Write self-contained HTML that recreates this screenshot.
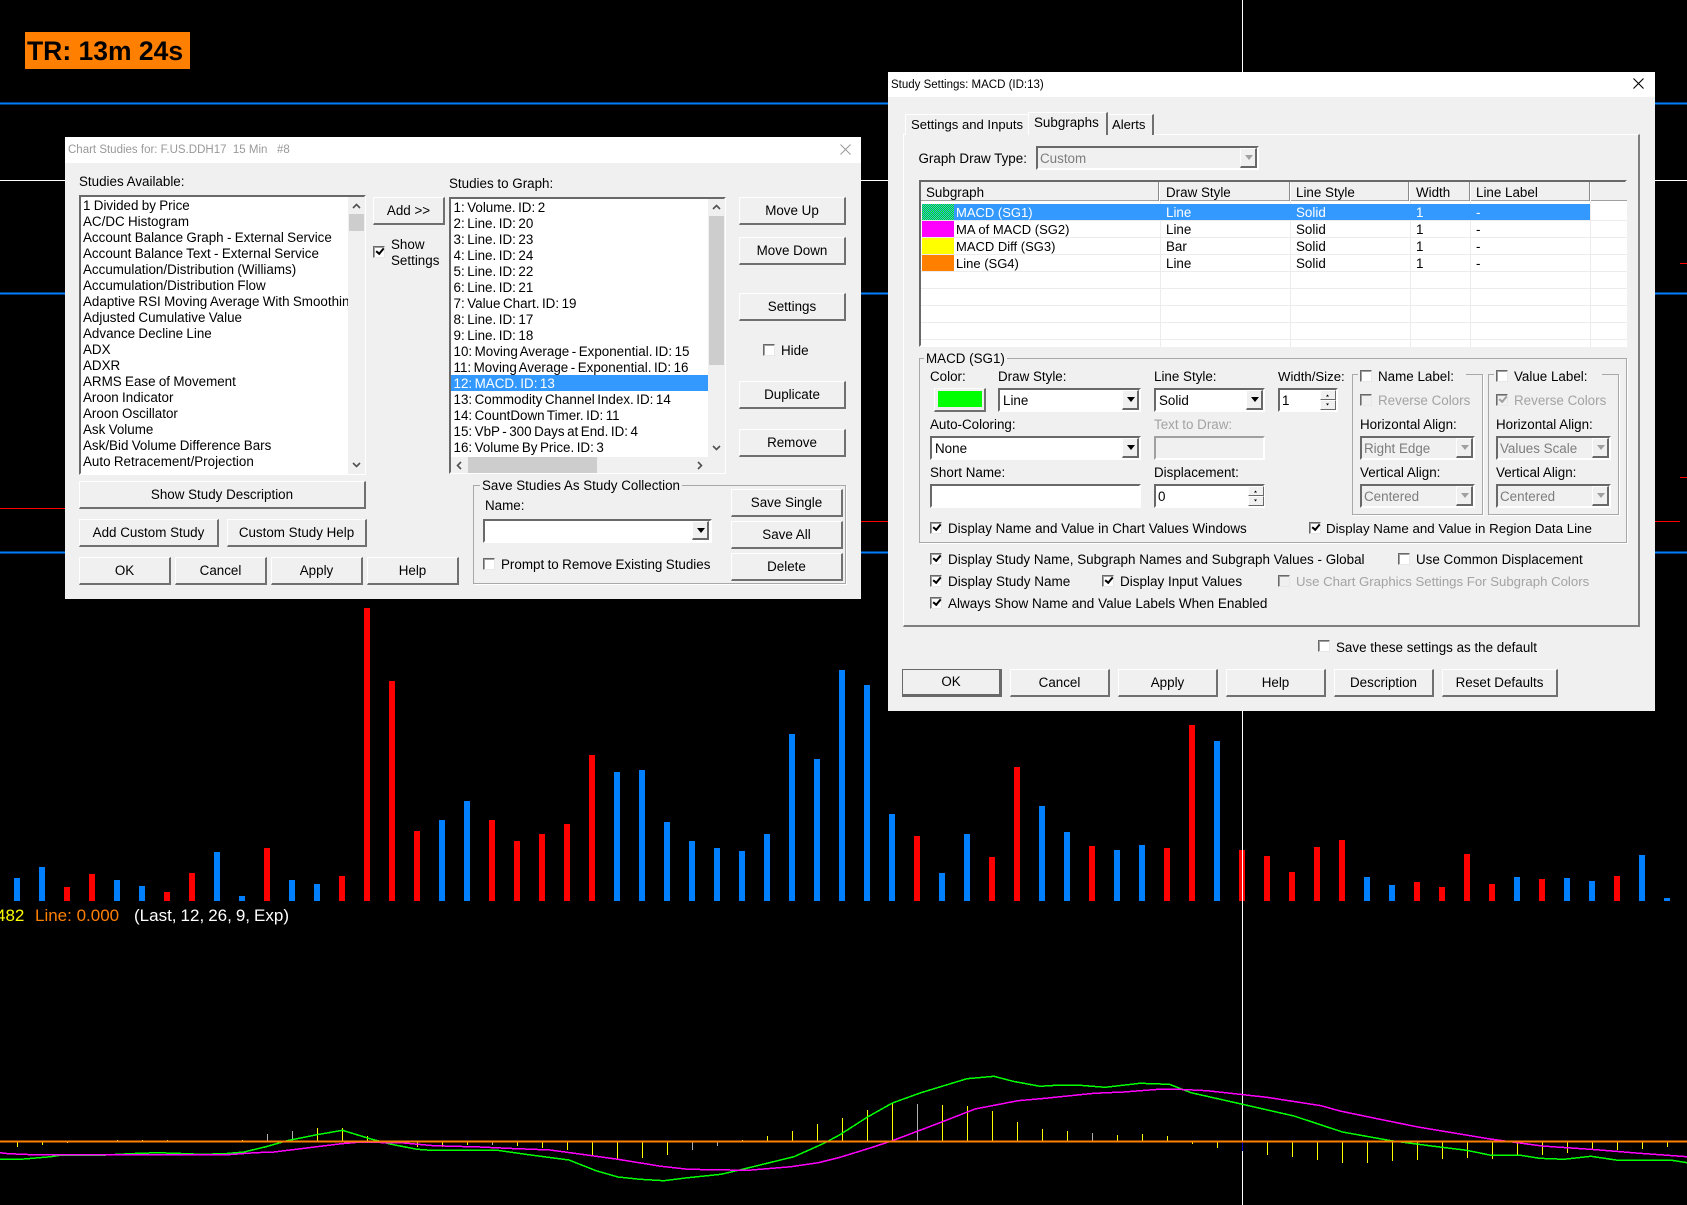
<!DOCTYPE html>
<html><head><meta charset="utf-8"><title>Chart Studies</title>
<style>
html,body{margin:0;padding:0;background:#000}
body{position:relative;width:1687px;height:1205px;overflow:hidden;font-family:"Liberation Sans",Arial,sans-serif;font-size:13.4px;color:#000}
div,span{box-sizing:border-box}
.a{position:absolute}
.t{position:absolute;white-space:nowrap;line-height:16px;height:16px}
.g{color:#a3a3a3}
.b{position:absolute;background:#f0f0f0;border-style:solid;border-width:1px 2px 2px 1px;border-color:#fff #707070 #707070 #fff;display:flex;align-items:center;justify-content:center;white-space:nowrap;padding-bottom:1px}
.s{position:absolute;background:#fff;border:2px solid;border-color:#696969 #fff #fff #696969;white-space:nowrap;line-height:21px;padding-left:2px;overflow:hidden}
.d{background:#f0f0f0;color:#7d7d7d}
.ab{position:absolute;top:0;right:0;bottom:0;width:17px;background:#f0f0f0;border:1px solid;border-color:#fff #696969 #696969 #fff;border-width:1px 2px 2px 1px}
.ab i{position:absolute;left:4px;top:6px;border:4px solid transparent;border-top:5px solid #000;border-bottom:0}
.d .ab i{border-top-color:#a0a0a0}
.c{position:absolute;width:12px;height:12px;background:#fff;border:1px solid;border-color:#696969 #e8e8e8 #e8e8e8 #696969;box-shadow:inset 1px 1px 0 #a0a0a0}
.c.x{background:#f0f0f0}
.k::after{content:"";position:absolute;left:2px;top:1px;width:6px;height:3px;border-left:2px solid #000;border-bottom:2px solid #000;transform:rotate(-50deg)}
.c.x.k::after{border-color:#a0a0a0}
.gb{position:absolute;border:1px solid #a8a8a8;box-shadow:1px 1px 0 #fff}
.l{position:absolute;background:#f0f0f0;padding:0 2px;white-space:nowrap;line-height:16px;height:16px}
.h{position:absolute;left:921px;width:706px;height:1px;background:#ececec}
.v{position:absolute;top:201px;width:1px;height:146px;background:#ececec}
.hs{position:absolute;top:182px;width:2px;height:19px;background:#8a8a8a;border-right:1px solid #fff}
.sp{position:absolute;background:#f0f0f0;border:1px solid;border-color:#fff #696969 #696969 #fff;width:16px;height:10px}
.list{position:absolute;white-space:nowrap;overflow:hidden;line-height:16px}
.list div{height:16px}
.tab{position:absolute;background:#f0f0f0;border-style:solid;border-width:1px 2px 0 1px;border-color:#fff #707070 #f0f0f0 #fff;white-space:nowrap;line-height:16px}
.sw{position:absolute;left:922px;width:32px;height:16px}
</style></head><body>

<svg class="a" style="left:0;top:0" width="1687" height="1205" viewBox="0 0 1687 1205" shape-rendering="crispEdges">
<g fill="none">
<path d="M0 103.5H1687M0 293.5H1687M0 552.5H1687" stroke="#0080ff" stroke-width="2"/>
<path d="M0 180.5H1687" stroke="#fff" stroke-width="1"/>
<path d="M0 508.5H70M861 521.5H888M1655 521.5H1680M1680 477.5H1687M1680 263.5H1687" stroke="#f00" stroke-width="1"/>
<path d="M17 878V901M42 867V901M117 880V901M142 886V901M217 852V901M242 896V901M292 880V901M317 884V901M442 820V901M467 801V901M617 772V901M642 770V901M667 822V901M692 841V901M717 848V901M742 851V901M767 834V901M792 734V901M817 759V901M842 670V901M867 685V901M892 814V901M942 873V901M967 834V901M1042 806V901M1067 832V901M1117 850V901M1142 845V901M1217 741V901M1367 877V901M1392 885V901M1517 877V901M1567 878V901M1592 881V901M1642 855V901M1667 898V901" stroke="#0080ff" stroke-width="6"/>
<path d="M67 887V901M92 874V901M167 892V901M192 873V901M267 848V901M342 876V901M367 608V901M392 681V901M417 831V901M492 820V901M517 841V901M542 834V901M567 824V901M592 755V901M917 836V901M992 857V901M1017 767V901M1092 846V901M1167 848V901M1192 725V901M1242 850V901M1267 856V901M1292 872V901M1317 847V901M1342 840V901M1417 882V901M1442 887V901M1467 854V901M1492 884V901M1542 879V901M1617 876V901" stroke="#f00" stroke-width="6"/>
<path d="M1242.5 0V1205" stroke="#fff" stroke-width="1"/>
<path d="M17.5 1142V1147M42.5 1142V1145M67.5 1142V1143M117.5 1140V1141M142.5 1140V1141M167.5 1140V1141M242.5 1140V1141M317.5 1128V1141M342.5 1128V1141M367.5 1136V1141M392.5 1142V1143M417.5 1142V1147M442.5 1142V1147M467.5 1142V1145M517.5 1142V1146M542.5 1142V1148M567.5 1142V1150M592.5 1142V1155M617.5 1142V1159M642.5 1142V1158M667.5 1142V1155M742.5 1140V1141M767.5 1136V1141M792.5 1131V1141M817.5 1124V1141M842.5 1118V1141M867.5 1110V1141M892.5 1103V1141M942.5 1105V1141M967.5 1106V1141M992.5 1111V1141M1017.5 1122V1141M1042.5 1129V1141M1067.5 1131V1141M1117.5 1135V1141M1142.5 1134V1141M1167.5 1136V1141M1192.5 1142V1144M1217.5 1142V1148M1267.5 1142V1155M1292.5 1142V1157M1317.5 1142V1160M1342.5 1142V1163M1367.5 1142V1163M1392.5 1142V1161M1417.5 1142V1160M1442.5 1142V1159M1467.5 1142V1158M1492.5 1142V1159M1517.5 1142V1155M1542.5 1142V1155M1567.5 1142V1153M1592.5 1142V1149M1617.5 1142V1150M1642.5 1142V1149M1667.5 1142V1147" stroke="#ff0" stroke-width="1"/>
<path d="M267.5 1134V1141M292.5 1131V1141M492.5 1142V1145M692.5 1142V1150M717.5 1142V1146M917.5 1104V1141M1092.5 1133V1141" stroke="#b0b0b0" stroke-width="1"/>
<path d="M1242.5 1142V1151" stroke="#0000c0" stroke-width="1"/>
<path d="M0 1159.3L24 1159L51 1156.7L62 1155L106 1155L130 1153.7L157 1152.7L187 1153.7L200 1154.3L225 1153.7L244 1152L266 1146.7L287 1140.7L317 1134.7L342.5 1130.3L368.5 1138.3L390 1144L417 1149.3L431 1150.3L497.5 1150.3L528.5 1154.7L569 1160L596 1170.7L618 1177L640 1179.3L664 1180.7L688 1177.7L721 1174.3L742.5 1169.3L794 1156.7L824 1143.3L840 1134.7L867 1117.3L892.4 1103L921 1092.7L967 1078.7L994 1076.3L1013 1081.3L1040 1086.3L1056 1085.3L1080 1085.3L1105 1087.3L1140 1083.3L1169.5 1084.3L1191 1092.7L1242.5 1104.3L1294 1116L1342.5 1132L1391 1140.7L1431.6 1146L1466.7 1150.3L1491 1155.3L1520.7 1155.3L1539.6 1158.3L1564 1159.3L1591 1156.3L1618 1160.3L1672 1160.3L1687 1162.7" stroke="#00ff00" stroke-width="1.5"/>
<path d="M0 1152.7L8 1153.7L32 1154.7L228 1154.7L255 1152.7L274 1152L309 1147.7L341.5 1143.7L358 1142.3L401 1142.7L433.6 1145.7L480 1147L507 1148.3L550 1150L574.5 1153.3L618 1159.3L661 1166.3L688 1169.3L748 1170.3L791 1166.7L818.4 1162.7L840 1157.3L872.4 1147.3L892.4 1140.7L942.6 1121.7L975 1109L1018 1100.7L1045 1098.3L1094 1093.3L1123.6 1092L1158.7 1089.3L1177.7 1089.3L1207 1090.7L1267 1097.3L1321 1105.7L1340 1111L1380 1119.3L1418 1127L1488 1138.7L1542 1146L1596 1149.7L1639.6 1153.3L1687 1156.7" stroke="#ff00ff" stroke-width="1.5"/>
<path d="M0 1141.5H1687" stroke="#ff8000" stroke-width="2"/>
</g>
</svg>

<div class="a" style="left:25px;top:32px;width:165px;height:37px;background:#ff8000"></div>
<div class="t" style="left:27px;top:36px;height:31px;line-height:31px;font-size:26.5px;font-weight:bold;color:#000">TR: 13m 24s</div>
<div class="t" style="left:-4px;top:906px;height:20px;line-height:20px;font-size:17px;color:#ff0">482</div>
<div class="t" style="left:35px;top:906px;height:20px;line-height:20px;font-size:17px;color:#ff8000">Line: 0.000</div>
<div class="t" style="left:134px;top:906px;height:20px;line-height:20px;font-size:17px;color:#fff;word-spacing:-.7px">(Last, 12, 26, 9, Exp)</div>

<!-- Chart Studies dialog -->
<div class="a" style="left:65px;top:137px;width:796px;height:462px;background:#f0f0f0"></div>
<div class="a" style="left:65px;top:137px;width:796px;height:26px;background:#fff"></div>
<div class="t" style="left:68px;top:142px;font-size:11.5px;color:#999">Chart Studies for: F.US.DDH17&nbsp; 15 Min&nbsp;&nbsp; #8</div>
<div class="t" style="left:79px;top:174px">Studies Available:</div>
<div class="t" style="left:449px;top:176px">Studies to Graph:</div>

<div class="s" style="left:79px;top:195px;width:287px;height:280px"></div>
<div class="a" style="left:348px;top:197px;width:17px;height:277px;background:#f0f0f0"></div>
<div class="a" style="left:349px;top:214px;width:15px;height:17px;background:#cdcdcd"></div>
<div class="list" style="left:83px;top:198px;width:265px;height:274px;word-spacing:-.4px">
<div>1 Divided by Price</div><div>AC/DC Histogram</div><div>Account Balance Graph - External Service</div><div>Account Balance Text - External Service</div><div>Accumulation/Distribution (Williams)</div><div>Accumulation/Distribution Flow</div><div>Adaptive RSI Moving Average With Smoothing</div><div>Adjusted Cumulative Value</div><div>Advance Decline Line</div><div>ADX</div><div>ADXR</div><div>ARMS Ease of Movement</div><div>Aroon Indicator</div><div>Aroon Oscillator</div><div>Ask Volume</div><div>Ask/Bid Volume Difference Bars</div><div>Auto Retracement/Projection</div><div>Automatic Trendlines</div></div>

<div class="b" style="left:373px;top:197px;width:72px;height:28px">Add &gt;&gt;</div>
<div class="c k" style="left:373px;top:246px"></div>
<div class="t" style="left:391px;top:237px">Show</div>
<div class="t" style="left:391px;top:253px">Settings</div>

<div class="s" style="left:449px;top:197px;width:277px;height:277px"></div>
<div class="a" style="left:708px;top:199px;width:17px;height:274px;background:#f0f0f0"></div>
<div class="a" style="left:709px;top:216px;width:15px;height:149px;background:#cdcdcd"></div>
<div class="a" style="left:451px;top:457px;width:257px;height:16px;background:#f0f0f0"></div>
<div class="a" style="left:468px;top:457px;width:129px;height:16px;background:#cdcdcd"></div>
<div class="a" style="left:451px;top:375px;width:257px;height:16px;background:#3399ff"></div>
<div class="list" style="left:453.5px;top:199px;width:254px;height:258px;word-spacing:-1.2px">
<div style="padding-top:1px">1: Volume. ID: 2</div><div style="padding-top:1px">2: Line. ID: 20</div><div style="padding-top:1px">3: Line. ID: 23</div><div style="padding-top:1px">4: Line. ID: 24</div><div style="padding-top:1px">5: Line. ID: 22</div><div style="padding-top:1px">6: Line. ID: 21</div><div style="padding-top:1px">7: Value Chart. ID: 19</div><div style="padding-top:1px">8: Line. ID: 17</div><div style="padding-top:1px">9: Line. ID: 18</div><div style="padding-top:1px">10: Moving Average - Exponential. ID: 15</div><div style="padding-top:1px">11: Moving Average - Exponential. ID: 16</div><div style="color:#fff;padding-top:1px">12: MACD. ID: 13</div><div style="padding-top:1px">13: Commodity Channel Index. ID: 14</div><div style="padding-top:1px">14: CountDown Timer. ID: 11</div><div style="padding-top:1px">15: VbP - 300 Days at End. ID: 4</div><div style="padding-top:1px">16: Volume By Price. ID: 3</div></div>

<div class="b" style="left:739px;top:197px;width:107px;height:28px">Move Up</div>
<div class="b" style="left:739px;top:237px;width:107px;height:28px">Move Down</div>
<div class="b" style="left:739px;top:293px;width:107px;height:28px">Settings</div>
<div class="c" style="left:763px;top:344px"></div>
<div class="t" style="left:781px;top:343px">Hide</div>
<div class="b" style="left:739px;top:381px;width:107px;height:28px">Duplicate</div>
<div class="b" style="left:739px;top:429px;width:107px;height:28px">Remove</div>
<div class="b" style="left:79px;top:481px;width:287px;height:28px">Show Study Description</div>
<div class="b" style="left:79px;top:519px;width:140px;height:28px">Add Custom Study</div>
<div class="b" style="left:227px;top:519px;width:140px;height:28px">Custom Study Help</div>
<div class="b" style="left:79px;top:557px;width:92px;height:28px">OK</div>
<div class="b" style="left:175px;top:557px;width:92px;height:28px">Cancel</div>
<div class="b" style="left:271px;top:557px;width:92px;height:28px">Apply</div>
<div class="b" style="left:367px;top:557px;width:92px;height:28px">Help</div>

<div class="gb" style="left:473px;top:485px;width:373px;height:99px"></div>
<div class="l" style="left:480px;top:478px">Save Studies As Study Collection</div>
<div class="t" style="left:485px;top:498px">Name:</div>
<div class="s" style="left:483px;top:519px;width:229px;height:24px"><span class="ab" style="right:1px;bottom:1px"><i></i></span></div>
<div class="c" style="left:483px;top:558px"></div>
<div class="t" style="left:501px;top:557px;word-spacing:-.3px">Prompt to Remove Existing Studies</div>
<div class="b" style="left:731px;top:489px;width:112px;height:28px">Save Single</div>
<div class="b" style="left:731px;top:521px;width:112px;height:28px">Save All</div>
<div class="b" style="left:731px;top:553px;width:112px;height:28px">Delete</div>

<!-- Study Settings dialog -->
<div class="a" style="left:888px;top:72px;width:767px;height:639px;background:#f0f0f0"></div>
<div class="a" style="left:888px;top:72px;width:767px;height:25px;background:#fff"></div>
<div class="t" style="left:891px;top:77px;font-size:11.5px">Study Settings: MACD (ID:13)</div>

<div class="a" style="left:903px;top:134px;width:737px;height:493px;background:#f0f0f0;border:1px solid;border-width:1px 2px 2px 1px;border-color:#fff #808080 #808080 #fff"></div>
<div class="tab" style="left:905px;top:114px;width:123px;height:21px;padding:2px 0 0 5px;border-right:0;font-size:13.1px">Settings and Inputs</div>
<div class="tab" style="left:1028px;top:112px;width:80px;height:23px;padding:2px 0 0 5px">Subgraphs</div>
<div class="tab" style="left:1108px;top:114px;width:46px;height:21px;padding:2px 0 0 4px;border-left:0;font-size:13.1px">Alerts</div>

<div class="t" style="left:918.5px;top:151px">Graph Draw Type:</div>
<div class="s d" style="left:1036px;top:146px;width:223px;height:24px">Custom<span class="ab"><i></i></span></div>

<div class="a" style="left:919px;top:180px;width:708px;height:167px;background:#fff;border:2px solid;border-color:#696969 #fff #fff #696969"></div>
<div class="a" style="left:921px;top:182px;width:706px;height:19px;background:#f0f0f0;border-bottom:1px solid #a0a0a0"></div>
<div class="hs" style="left:1158px"></div><div class="hs" style="left:1289px"></div><div class="hs" style="left:1408px"></div><div class="hs" style="left:1469px"></div><div class="hs" style="left:1589px"></div>
<div class="t" style="left:926px;top:185px">Subgraph</div>
<div class="t" style="left:1166px;top:185px">Draw Style</div>
<div class="t" style="left:1296px;top:185px">Line Style</div>
<div class="t" style="left:1416px;top:185px">Width</div>
<div class="t" style="left:1476px;top:185px">Line Label</div>
<div class="h" style="top:220px"></div><div class="h" style="top:237px"></div><div class="h" style="top:254px"></div><div class="h" style="top:271px"></div><div class="h" style="top:288px"></div><div class="h" style="top:305px"></div><div class="h" style="top:322px"></div><div class="h" style="top:339px"></div>
<div class="v" style="left:1160px"></div><div class="v" style="left:1290px"></div><div class="v" style="left:1410px"></div><div class="v" style="left:1470px"></div><div class="v" style="left:1590px"></div>
<div class="a" style="left:922px;top:204px;width:668px;height:16px;background:#3399ff"></div>
<div class="sw" style="top:204px;background:repeating-conic-gradient(#00ff00 0 25%,#3399ff 0 50%) 0 0/2px 2px"></div>
<div class="sw" style="top:221px;background:#ff00ff"></div>
<div class="sw" style="top:238px;background:#ffff00"></div>
<div class="sw" style="top:255px;background:#ff8000"></div>
<div class="t" style="left:956px;top:205px;color:#fff;font-size:13px">MACD (SG1)</div><div class="t" style="left:1166px;top:205px;color:#fff">Line</div><div class="t" style="left:1296px;top:205px;color:#fff">Solid</div><div class="t" style="left:1416px;top:205px;color:#fff">1</div><div class="t" style="left:1476px;top:205px;color:#fff">-</div>
<div class="t" style="left:956px;top:222px;font-size:13px">MA of MACD (SG2)</div><div class="t" style="left:1166px;top:222px">Line</div><div class="t" style="left:1296px;top:222px">Solid</div><div class="t" style="left:1416px;top:222px">1</div><div class="t" style="left:1476px;top:222px">-</div>
<div class="t" style="left:956px;top:239px;font-size:13px">MACD Diff (SG3)</div><div class="t" style="left:1166px;top:239px">Bar</div><div class="t" style="left:1296px;top:239px">Solid</div><div class="t" style="left:1416px;top:239px">1</div><div class="t" style="left:1476px;top:239px">-</div>
<div class="t" style="left:956px;top:256px;font-size:13px">Line (SG4)</div><div class="t" style="left:1166px;top:256px">Line</div><div class="t" style="left:1296px;top:256px">Solid</div><div class="t" style="left:1416px;top:256px">1</div><div class="t" style="left:1476px;top:256px">-</div>

<div class="gb" style="left:919px;top:358px;width:708px;height:185px"></div>
<div class="l" style="left:924px;top:351px">MACD (SG1)</div>
<div class="t" style="left:930px;top:369px">Color:</div>
<div class="t" style="left:998px;top:369px">Draw Style:</div>
<div class="t" style="left:1154px;top:369px">Line Style:</div>
<div class="t" style="left:1278px;top:369px;font-size:13.2px">Width/Size:</div>
<div class="b" style="left:934px;top:388px;width:52px;height:24px"><span style="display:block;width:44px;height:16px;background:#00ff00"></span></div>
<div class="s" style="left:998px;top:388px;width:143px;height:24px;padding-left:3px">Line<span class="ab"><i></i></span></div>
<div class="s" style="left:1154px;top:388px;width:111px;height:24px;padding-left:3px">Solid<span class="ab"><i></i></span></div>
<div class="s" style="left:1278px;top:388px;width:60px;height:24px;padding-left:2px">1</div>
<div class="sp" style="left:1320px;top:390px"></div><div class="sp" style="left:1320px;top:400px"></div>
<div class="t" style="left:930px;top:417px">Auto-Coloring:</div>
<div class="t g" style="left:1154px;top:417px">Text to Draw:</div>
<div class="s" style="left:930px;top:436px;width:211px;height:24px;padding-left:3px">None<span class="ab"><i></i></span></div>
<div class="s d" style="left:1154px;top:436px;width:111px;height:24px;border-color:#a0a0a0 #fff #fff #a0a0a0"></div>
<div class="t" style="left:930px;top:465px">Short Name:</div>
<div class="t" style="left:1154px;top:465px">Displacement:</div>
<div class="s" style="left:930px;top:484px;width:211px;height:24px"></div>
<div class="s" style="left:1154px;top:484px;width:111px;height:24px;padding-left:2px">0</div>
<div class="sp" style="left:1248px;top:486px"></div><div class="sp" style="left:1248px;top:496px"></div>

<div class="gb" style="left:1352px;top:374px;width:131px;height:141px"></div>
<div class="l" style="left:1358px;top:369px;width:108px"></div>
<div class="c" style="left:1360px;top:370px"></div>
<div class="t" style="left:1378px;top:369px">Name Label:</div>
<div class="c x" style="left:1360px;top:394px"></div>
<div class="t g" style="left:1378px;top:393px">Reverse Colors</div>
<div class="t" style="left:1360px;top:417px">Horizontal Align:</div>
<div class="s d" style="left:1360px;top:436px;width:115px;height:24px">Right Edge<span class="ab"><i></i></span></div>
<div class="t" style="left:1360px;top:465px">Vertical Align:</div>
<div class="s d" style="left:1360px;top:484px;width:115px;height:24px">Centered<span class="ab"><i></i></span></div>

<div class="gb" style="left:1488px;top:374px;width:131px;height:141px"></div>
<div class="l" style="left:1494px;top:369px;width:108px"></div>
<div class="c" style="left:1496px;top:370px"></div>
<div class="t" style="left:1514px;top:369px">Value Label:</div>
<div class="c x k" style="left:1496px;top:394px"></div>
<div class="t g" style="left:1514px;top:393px">Reverse Colors</div>
<div class="t" style="left:1496px;top:417px">Horizontal Align:</div>
<div class="s d" style="left:1496px;top:436px;width:115px;height:24px">Values Scale<span class="ab"><i></i></span></div>
<div class="t" style="left:1496px;top:465px">Vertical Align:</div>
<div class="s d" style="left:1496px;top:484px;width:115px;height:24px">Centered<span class="ab"><i></i></span></div>

<div class="c k" style="left:930px;top:522px"></div>
<div class="t" style="left:948px;top:521px">Display Name and Value in Chart Values Windows</div>
<div class="c k" style="left:1308.5px;top:522px"></div>
<div class="t" style="left:1326px;top:521px;font-size:13.3px">Display Name and Value in Region Data Line</div>
<div class="c k" style="left:930px;top:553px"></div>
<div class="t" style="left:948px;top:552px;font-size:13.45px">Display Study Name, Subgraph Names and Subgraph Values - Global</div>
<div class="c" style="left:1398px;top:553px"></div>
<div class="t" style="left:1416px;top:552px">Use Common Displacement</div>
<div class="c k" style="left:930px;top:575px"></div>
<div class="t" style="left:948px;top:574px;font-size:13.5px">Display Study Name</div>
<div class="c k" style="left:1102px;top:575px"></div>
<div class="t" style="left:1120px;top:574px;font-size:13.5px">Display Input Values</div>
<div class="c x" style="left:1278px;top:575px"></div>
<div class="t g" style="left:1296px;top:574px;font-size:13.2px">Use Chart Graphics Settings For Subgraph Colors</div>
<div class="c k" style="left:930px;top:597px"></div>
<div class="t" style="left:948px;top:596px;font-size:13.5px">Always Show Name and Value Labels When Enabled</div>
<div class="c" style="left:1318px;top:640px"></div>
<div class="t" style="left:1336px;top:640px">Save these settings as the default</div>

<div class="b" style="left:902px;top:669px;width:100px;height:28px;border-color:#696969;border-width:1px 3px 3px 1px">OK</div>
<div class="b" style="left:1010px;top:669px;width:100px;height:28px">Cancel</div>
<div class="b" style="left:1118px;top:669px;width:100px;height:28px">Apply</div>
<div class="b" style="left:1226px;top:669px;width:100px;height:28px">Help</div>
<div class="b" style="left:1334px;top:669px;width:100px;height:28px">Description</div>
<div class="b" style="left:1442px;top:669px;width:116px;height:28px">Reset Defaults</div>

<!-- glyph overlay: chevrons, close marks, spinner triangles -->
<svg class="a" style="left:0;top:0" width="1687" height="1205" viewBox="0 0 1687 1205" fill="none">
<path d="M840.5 144.5L850.5 154.5M850.5 144.5L840.5 154.5" stroke="#999" stroke-width="1"/>
<path d="M1633.5 78.5L1643.5 88.5M1643.5 78.5L1633.5 88.5" stroke="#000" stroke-width="1.1"/>
<path d="M353 208L356.5 204.5L360 208M353 463L356.5 466.5L360 463M713 209L716.5 205.5L720 209M713 446L716.5 449.500L720 446M461 462L457.500 465.500L461 469M698 462L701.500 465.500L698 469" stroke="#505050" stroke-width="1.6"/>
<path d="M1326 396.500h3l-1.500 -2zM1326 403.500h3l-1.500 2zM1254 492.500h3l-1.500 -2zM1254 499.500h3l-1.500 2z" fill="#000"/>
</svg>
</body></html>
